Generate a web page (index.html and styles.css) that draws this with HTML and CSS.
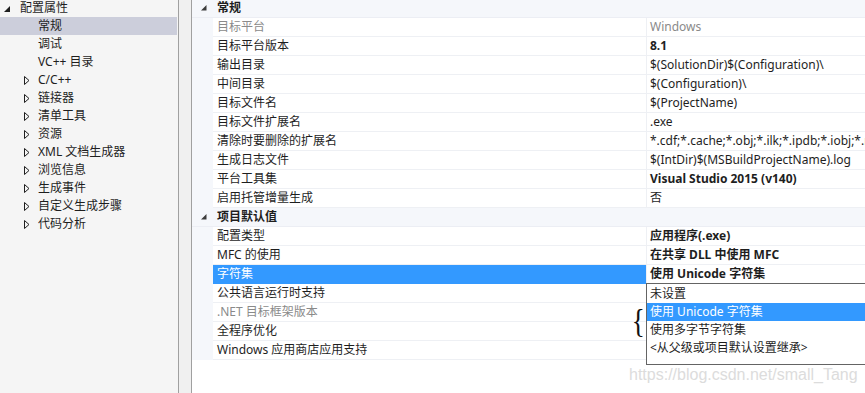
FILE: index.html
```html
<!DOCTYPE html>
<html lang="zh-CN">
<head>
<meta charset="utf-8">
<title>配置属性</title>
<link rel="stylesheet" href="styles.css">
</head>
<body>
<div class="app">
  <div class="tree">
    <div class="node root"><span class="tw"><svg width="7" height="7" viewBox="0 0 7 7"><polygon points="6,0 6,6 0,6" fill="#1e1e1e"/></svg></span>配置属性</div>
    <div class="node child sel"><span class="tw"></span>常规</div>
    <div class="node child"><span class="tw"></span>调试</div>
    <div class="node child"><span class="tw"></span>VC++ 目录</div>
    <div class="node child"><span class="tw"><svg width="6" height="9" viewBox="0 0 6 9"><polygon points="0.5,0.5 5,4.5 0.5,8.5" fill="none" stroke="#1e1e1e" stroke-width="1"/></svg></span>C/C++</div>
    <div class="node child"><span class="tw"><svg width="6" height="9" viewBox="0 0 6 9"><polygon points="0.5,0.5 5,4.5 0.5,8.5" fill="none" stroke="#1e1e1e" stroke-width="1"/></svg></span>链接器</div>
    <div class="node child"><span class="tw"><svg width="6" height="9" viewBox="0 0 6 9"><polygon points="0.5,0.5 5,4.5 0.5,8.5" fill="none" stroke="#1e1e1e" stroke-width="1"/></svg></span>清单工具</div>
    <div class="node child"><span class="tw"><svg width="6" height="9" viewBox="0 0 6 9"><polygon points="0.5,0.5 5,4.5 0.5,8.5" fill="none" stroke="#1e1e1e" stroke-width="1"/></svg></span>资源</div>
    <div class="node child"><span class="tw"><svg width="6" height="9" viewBox="0 0 6 9"><polygon points="0.5,0.5 5,4.5 0.5,8.5" fill="none" stroke="#1e1e1e" stroke-width="1"/></svg></span>XML 文档生成器</div>
    <div class="node child"><span class="tw"><svg width="6" height="9" viewBox="0 0 6 9"><polygon points="0.5,0.5 5,4.5 0.5,8.5" fill="none" stroke="#1e1e1e" stroke-width="1"/></svg></span>浏览信息</div>
    <div class="node child"><span class="tw"><svg width="6" height="9" viewBox="0 0 6 9"><polygon points="0.5,0.5 5,4.5 0.5,8.5" fill="none" stroke="#1e1e1e" stroke-width="1"/></svg></span>生成事件</div>
    <div class="node child"><span class="tw"><svg width="6" height="9" viewBox="0 0 6 9"><polygon points="0.5,0.5 5,4.5 0.5,8.5" fill="none" stroke="#1e1e1e" stroke-width="1"/></svg></span>自定义生成步骤</div>
    <div class="node child"><span class="tw"><svg width="6" height="9" viewBox="0 0 6 9"><polygon points="0.5,0.5 5,4.5 0.5,8.5" fill="none" stroke="#1e1e1e" stroke-width="1"/></svg></span>代码分析</div>
  </div>
  <div class="gutter"></div>
  <div class="grid">
    <div class="rows">
      <div class="cat"><span class="m"><svg width="6" height="6" viewBox="0 0 6 6"><polygon points="5.5,0 5.5,5.5 0,5.5" fill="#3c3c3c"/></svg></span><span class="cn">常规</span></div>
      <div class="row"><span class="m"></span><span class="n dim">目标平台</span><span class="v dim">Windows</span></div>
      <div class="row"><span class="m"></span><span class="n">目标平台版本</span><span class="v b">8.1</span></div>
      <div class="row"><span class="m"></span><span class="n">输出目录</span><span class="v">$(SolutionDir)$(Configuration)\</span></div>
      <div class="row"><span class="m"></span><span class="n">中间目录</span><span class="v">$(Configuration)\</span></div>
      <div class="row"><span class="m"></span><span class="n">目标文件名</span><span class="v">$(ProjectName)</span></div>
      <div class="row"><span class="m"></span><span class="n">目标文件扩展名</span><span class="v">.exe</span></div>
      <div class="row"><span class="m"></span><span class="n">清除时要删除的扩展名</span><span class="v">*.cdf;*.cache;*.obj;*.ilk;*.ipdb;*.iobj;*.resources;*.tlb;*.tli;*.tlh</span></div>
      <div class="row"><span class="m"></span><span class="n">生成日志文件</span><span class="v">$(IntDir)$(MSBuildProjectName).log</span></div>
      <div class="row"><span class="m"></span><span class="n">平台工具集</span><span class="v b">Visual Studio 2015 (v140)</span></div>
      <div class="row"><span class="m"></span><span class="n">启用托管增量生成</span><span class="v">否</span></div>
      <div class="cat"><span class="m"><svg width="6" height="6" viewBox="0 0 6 6"><polygon points="5.5,0 5.5,5.5 0,5.5" fill="#3c3c3c"/></svg></span><span class="cn">项目默认值</span></div>
      <div class="row"><span class="m"></span><span class="n">配置类型</span><span class="v b">应用程序(.exe)</span></div>
      <div class="row"><span class="m"></span><span class="n">MFC 的使用</span><span class="v b">在共享 DLL 中使用 MFC</span></div>
      <div class="row hl"><span class="m"></span><span class="n">字符集</span><span class="v b">使用 Unicode 字符集</span></div>
      <div class="row"><span class="m"></span><span class="n">公共语言运行时支持</span><span class="v"></span></div>
      <div class="row"><span class="m"></span><span class="n dim">.NET 目标框架版本</span><span class="v"></span></div>
      <div class="row"><span class="m"></span><span class="n">全程序优化</span><span class="v"></span></div>
      <div class="row"><span class="m"></span><span class="n">Windows 应用商店应用支持</span><span class="v"></span></div>
    </div>
    <div class="dropdown">
      <div class="opt">未设置</div>
      <div class="opt on">使用 Unicode 字符集</div>
      <div class="opt">使用多字节字符集</div>
      <div class="opt">&lt;从父级或项目默认设置继承&gt;</div>
    </div>
    <div class="brace">{</div>
    <div class="mark">https://blog.csdn.net/small_Tang</div>
  </div>
</div>
</body>
</html>
```
FILE: styles.css
```css
* { box-sizing: border-box; }
html, body { margin: 0; padding: 0; }
body {
  width: 865px;
  height: 393px;
  overflow: hidden;
  background: #ffffff;
  font-family: "Noto Sans", "Noto Sans CJK SC", sans-serif;
  font-size: 12px;
  color: #1e1e1e;
}
.app { display: flex; height: 393px; }

.tree {
  width: 179px;
  flex: none;
  background: #f5f5f5;
  border-right: 1px solid #a0a0a0;
  margin-top: -1px;
}
.node {
  height: 18px;
  line-height: 18px;
  display: flex;
  align-items: center;
  white-space: nowrap;
}
.node.root { padding-left: 4px; }
.node.root .tw { width: 16px; display: flex; align-items: center; margin-top: 2px; }
.node.child { padding-left: 24px; }
.node.child .tw { width: 14px; display: flex; align-items: center; }
.node.sel { background: #cccedb; margin-right: 1px; }

.gutter {
  width: 13px;
  flex: none;
  background: #f0f0f0;
  border-right: 1px solid #a0a0a0;
}

.grid {
  flex: 1;
  position: relative;
  overflow: hidden;
  background: #ffffff;
}
.rows { margin-top: -1px; }
.row, .cat {
  display: flex;
  height: 19px;
  white-space: nowrap;
}
.m {
  width: 21px;
  flex: none;
  background: #f5f7fb;
  display: flex;
  align-items: center;
  justify-content: center;
  padding-left: 2px;
}
.cat { background: #f5f7fb; border-bottom: 1px solid #eceef4; }
.cat .cn { font-weight: bold; padding-left: 4px; line-height: 18px; color: #1e1e1e; }
.row .n {
  width: 434px;
  flex: none;
  padding-left: 4px;
  line-height: 18px;
  border-bottom: 1px solid #eef0f4;
  border-right: 1px solid #eef0f4;
}
.row .v {
  flex: 1;
  padding-left: 3px;
  line-height: 18px;
  border-bottom: 1px solid #eef0f4;
  overflow: hidden;
}
.dim { color: #8a8a8a; }
.b { font-weight: bold; }
.row.hl .n { background: #3399ff; color: #ffffff; border-bottom-color: #3399ff; }

.dropdown {
  position: absolute;
  left: 454px;
  top: 283px;
  width: 240px;
  height: 82px;
  background: #ffffff;
  border: 1px solid #646464;
}
.opt {
  height: 18px;
  line-height: 18px;
  padding-left: 3px;
  white-space: nowrap;
  color: #1e1e1e;
}
.opt:first-child { height: 19px; line-height: 19px; }
.opt.on { background: #3399ff; color: #ffffff; }

.brace {
  position: absolute;
  left: 438px;
  top: 304px;
  font-family: "Liberation Serif", serif;
  font-size: 34px;
  line-height: 34px;
  color: #111111;
  transform: scaleX(0.8);
}
.mark {
  position: absolute;
  left: 437px;
  top: 365px;
  font-family: "Liberation Sans", Arial, sans-serif;
  font-size: 16px;
  line-height: 20px;
  color: #dcdcdc;
  white-space: nowrap;
}
```
